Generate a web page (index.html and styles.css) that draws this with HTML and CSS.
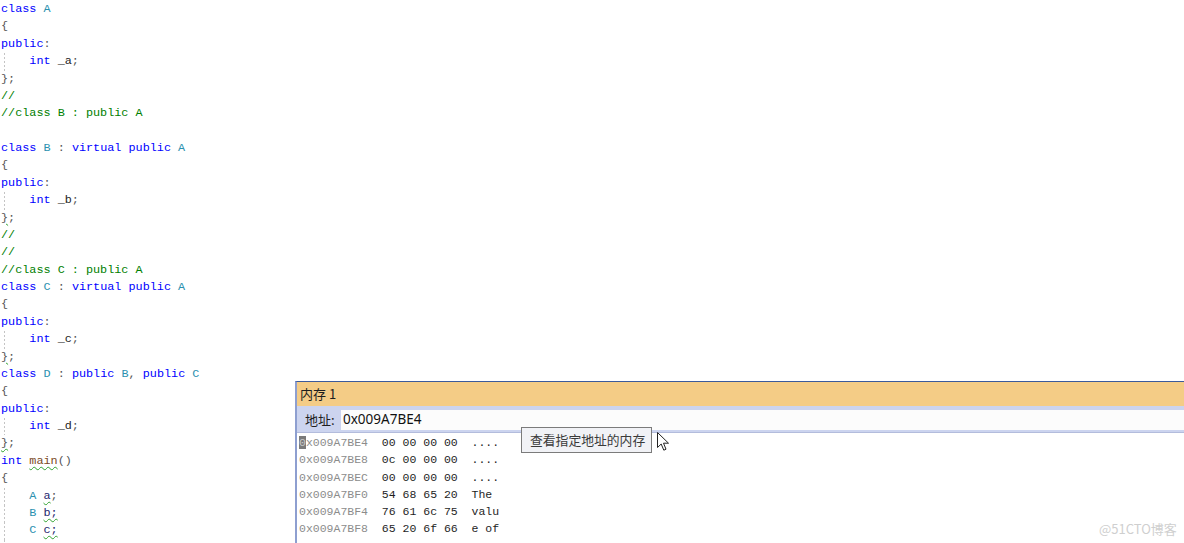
FILE: index.html
```html
<!DOCTYPE html>
<html lang="zh-CN">
<head>
    <meta charset="UTF-8">
    <title>内存 1</title>
    <link rel="stylesheet" href="styles.css">
</head>
<body>

    <!-- Editor -->
    <div class="code">
        <div class="ln"><span class="kw">class</span> <span class="ty">A</span></div>
        <div class="ln"><span class="p">{</span></div>
        <div class="ln"><span class="kw">public</span><span class="p">:</span></div>
        <div class="ln g">    <span class="kw">int</span> _a<span class="p">;</span></div>
        <div class="ln"><span class="p">};</span></div>
        <div class="ln cm">//</div>
        <div class="ln cm">//class B : public A</div>
        <div class="ln"> </div>
        <div class="ln"><span class="kw">class</span> <span class="ty">B</span> <span class="p">:</span> <span class="kw">virtual</span> <span class="kw">public</span> <span class="ty">A</span></div>
        <div class="ln"><span class="p">{</span></div>
        <div class="ln"><span class="kw">public</span><span class="p">:</span></div>
        <div class="ln g">    <span class="kw">int</span> _b<span class="p">;</span></div>
        <div class="ln"><span class="p sq">}</span><span class="p">;</span></div>
        <div class="ln cm">//</div>
        <div class="ln cm">//</div>
        <div class="ln cm">//class C : public A</div>
        <div class="ln"><span class="kw">class</span> <span class="ty">C</span> <span class="p">:</span> <span class="kw">virtual</span> <span class="kw">public</span> <span class="ty">A</span></div>
        <div class="ln"><span class="p">{</span></div>
        <div class="ln"><span class="kw">public</span><span class="p">:</span></div>
        <div class="ln g">    <span class="kw">int</span> _c<span class="p">;</span></div>
        <div class="ln"><span class="p sq">}</span><span class="p">;</span></div>
        <div class="ln"><span class="kw">class</span> <span class="ty">D</span> <span class="p">:</span> <span class="kw">public</span> <span class="ty">B</span><span class="p">,</span> <span class="kw">public</span> <span class="ty">C</span></div>
        <div class="ln"><span class="p">{</span></div>
        <div class="ln"><span class="kw">public</span><span class="p">:</span></div>
        <div class="ln g">    <span class="kw">int</span> _d<span class="p">;</span></div>
        <div class="ln"><span class="p sq">}</span><span class="p">;</span></div>
        <div class="ln"><span class="kw">int</span> <span class="fn sq">main</span><span class="p">()</span></div>
        <div class="ln"><span class="p">{</span></div>
        <div class="ln g">    <span class="ty">A</span> <span class="var sq">a</span><span class="p">;</span></div>
        <div class="ln g">    <span class="ty">B</span> <span class="var sq">b;</span></div>
        <div class="ln g">    <span class="ty">C</span> <span class="var sq">c;</span></div>
        <div class="ln g">    <span class="ty">D</span> <span class="var sq">d;</span></div>
    </div>

    <!-- Memory window -->
    <div class="mem">
        <div class="mem-title">内存 1</div>
        <div class="mem-addr">
            <span class="mem-label">地址:</span>
            <div class="mem-input">0x009A7BE4</div>
        </div>
        <div class="mem-rows">
            <div class="row"><span class="addr"><span class="caret">0</span>x009A7BE4</span>  00 00 00 00  ....</div>
            <div class="row"><span class="addr">0x009A7BE8</span>  0c 00 00 00  ....</div>
            <div class="row"><span class="addr">0x009A7BEC</span>  00 00 00 00  ....</div>
            <div class="row"><span class="addr">0x009A7BF0</span>  54 68 65 20  The </div>
            <div class="row"><span class="addr">0x009A7BF4</span>  76 61 6c 75  valu</div>
            <div class="row"><span class="addr">0x009A7BF8</span>  65 20 6f 66  e of</div>
            <div class="row"><span class="addr">0x009A7BFC</span>  20 45 53 50   ESP</div>
        </div>
    </div>

    <div class="tooltip">查看指定地址的内存</div>

    <svg class="cursor" width="13" height="20" viewBox="0 0 13 20">
        <path d="M0.5 0.5 L0.5 15.5 L4.2 12 L6.8 18.2 L9 17.2 L6.5 11.2 L11.5 11.2 Z" fill="#fff" stroke="#222" stroke-width="1"/>
    </svg>

    <div class="watermark">@51CTO博客</div>

</body>
</html>
```

FILE: styles.css
```css
body {
    margin: 0;
    background-color: #fff;
    height: 543px;
    overflow: hidden;
    position: relative;
}

/* Editor */
.code {
    padding-top: 1px;
    padding-left: 1px;
    font-family: "Liberation Mono", monospace;
    font-size: 11.8px;
    color: #1e1e1e;
}

.ln {
    height: 17.38px;
    line-height: 17.38px;
    white-space: pre;
}

.ln.g {
    background: repeating-linear-gradient(to bottom, #c4c4c4 0 2px, transparent 2px 4px) 3px 0 / 1px 100% no-repeat;
}

.kw { color: #0000ff; }
.ty { color: #2b91af; }
.cm { color: #008000; }
.p { color: #555; }
.fn { color: #7b4a1e; }
.var { color: #1f1f6e; }

.sq {
    text-decoration: underline wavy #2fa12f;
    text-decoration-thickness: 1px;
    text-underline-offset: 2px;
}

/* Memory window */
.mem {
    position: absolute;
    left: 295px;
    top: 381px;
    right: 0;
    bottom: 0;
    border-top: 1px solid #3c5a9a;
    border-left: 2px solid #8e9fd0;
    background-color: #fff;
    font-family: "Noto Sans CJK SC", "Noto Sans", sans-serif;
}

.mem-title {
    height: 24px;
    line-height: 23px;
    background-color: #f4cc86;
    color: #1e1e1e;
    font-size: 13px;
    padding-left: 3px;
}

.mem-addr {
    display: flex;
    align-items: center;
    height: 23px;
    padding: 3px 0 0 8px;
    background-color: #ccd4ef;
    border-bottom: 1px solid #b3bcdc;
}

.mem-label {
    font-size: 13px;
    color: #1e1e1e;
    width: 36px;
    margin-top: -2px;
}

.mem-input {
    flex: 1;
    height: 20px;
    line-height: 19px;
    margin-top: -2px;
    background-color: #fcfcfc;
    padding-left: 2px;
    font-family: "Noto Sans", sans-serif;
    font-size: 13.5px;
    color: #111;
}

.mem-rows {
    padding-left: 2px;
    padding-top: 1px;
    font-family: "Liberation Mono", monospace;
    font-size: 11.5px;
    color: #1e1e1e;
}

.row {
    height: 17.3px;
    line-height: 17.3px;
    white-space: pre;
}

.addr { color: #8c8c8c; }

.caret {
    background-color: #7a7a7a;
    color: #c8c8c8;
}

.tooltip {
    position: absolute;
    left: 521px;
    top: 427px;
    width: 121px;
    height: 24px;
    line-height: 24px;
    padding-left: 8px;
    background-color: #f1f2f6;
    border: 1px solid #7b7b7b;
    font-family: "Noto Sans CJK SC", sans-serif;
    font-size: 12.8px;
    color: #3a3a3a;
}

.cursor {
    position: absolute;
    left: 657px;
    top: 432px;
}

.watermark {
    position: absolute;
    left: 1099px;
    top: 519px;
    font-family: "Noto Sans CJK SC", sans-serif;
    font-size: 13px;
    color: #cfcfcf;
}
```
